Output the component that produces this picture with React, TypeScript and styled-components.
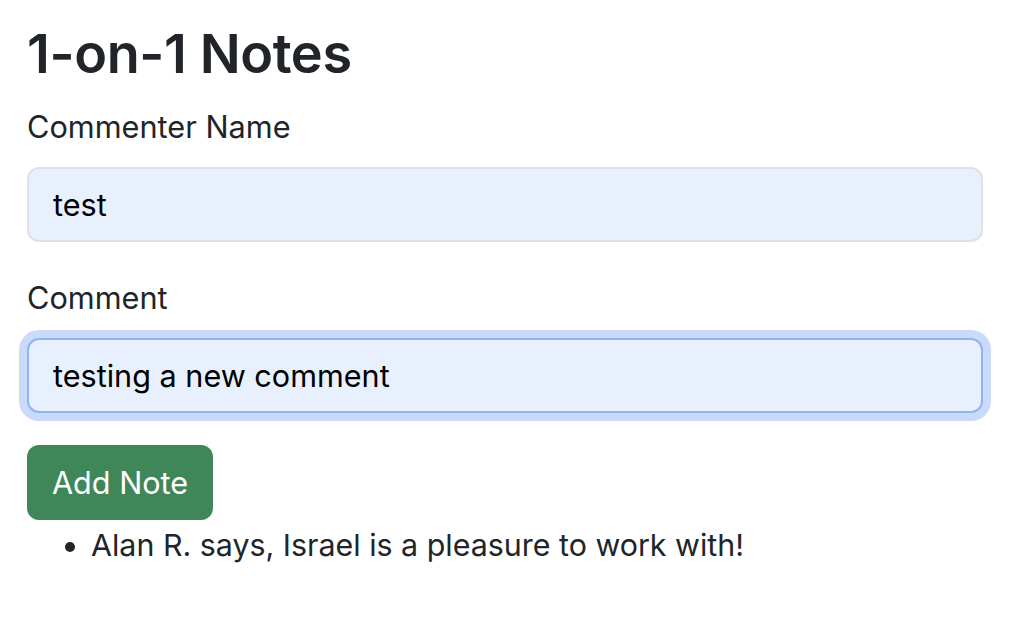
import React from 'react';
import styled, { createGlobalStyle } from 'styled-components';

const GlobalStyle = createGlobalStyle`
  html, body {
    margin: 0;
    padding: 0;
    background: #fff;
  }
  body {
    font-family: Inter, "Noto Sans", "Liberation Sans", sans-serif;
    color: #212529;
  }
`;

const Page = styled.div`
  width: 956px;
  padding: 20px 0 0 27px;
`;

const Title = styled.h3`
  margin: 0 0 16px;
  font-size: 54px;
  font-weight: 600;
  line-height: 67px;
  letter-spacing: -0.4px;
`;

const Field = styled.div`
  margin-bottom: 32px;
`;

const Label = styled.label`
  display: block;
  margin-bottom: 16px;
  font-size: 30.7px;
  line-height: 48px;
`;

const Input = styled.input<{ $focused?: boolean }>`
  display: block;
  box-sizing: border-box;
  width: 100%;
  height: 75px;
  padding: 0 24px;
  font-family: inherit;
  font-size: 30.6px;
  color: #000;
  background: #e8f0fe;
  border: 2px solid ${p => (p.$focused ? '#8db4f7' : '#dee2e6')};
  border-radius: 12px;
  outline: none;
  box-shadow: ${p => (p.$focused ? '0 0 0 8px #cadafb' : 'none')};
`;

const Button = styled.button`
  display: block;
  box-sizing: border-box;
  height: 75px;
  margin-top: 1px;
  padding: 0 25px;
  font-family: inherit;
  font-size: 30.6px;
  color: #fff;
  background: #3f8759;
  border: none;
  border-radius: 12px;
`;

const Notes = styled.ul`
  margin: 0;
  padding-left: 64px;
  font-size: 30.4px;
  line-height: 50px;
`;

export default function App() {
  return (
    <>
      <GlobalStyle />
      <Page>
        <Title>1-on-1 Notes</Title>
        <Field>
          <Label>Commenter Name</Label>
          <Input defaultValue="test" />
        </Field>
        <Field>
          <Label>Comment</Label>
          <Input $focused defaultValue="testing a new comment" />
        </Field>
        <Button>Add Note</Button>
        <Notes>
          <li>Alan R. says, Israel is a pleasure to work with!</li>
        </Notes>
      </Page>
    </>
  );
}
